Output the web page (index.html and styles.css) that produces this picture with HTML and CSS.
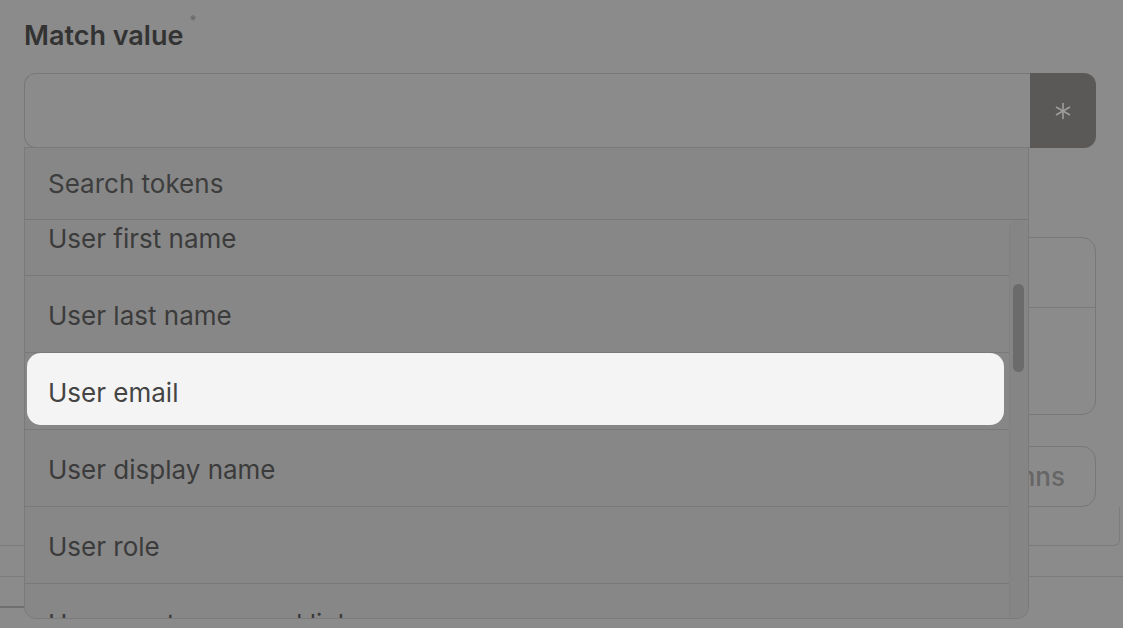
FILE: index.html
```html
<!DOCTYPE html>
<html lang="en">
<head>
    <meta charset="UTF-8">
    <meta name="viewport" content="width=device-width, initial-scale=1.0">
    <title>Match value</title>
    <link rel="stylesheet" href="styles.css">
</head>
<body>
    <div class="page">
        <!-- Campo com menu de tokens aberto -->
        <div class="field">
            <label class="field-label">Match value<span class="required">*</span></label>
            <div class="input-group">
                <div class="input"></div>
                <button class="token-button" aria-label="Insert token">
                    <svg width="18" height="18" viewBox="0 0 18 18">
                        <g stroke="#9d9d9d" stroke-width="1.6" stroke-linecap="round">
                            <line x1="9" y1="1.5" x2="9" y2="16.5"/>
                            <line x1="2.5" y1="5.25" x2="15.5" y2="12.75"/>
                            <line x1="2.5" y1="12.75" x2="15.5" y2="5.25"/>
                        </g>
                    </svg>
                </button>
            </div>

            <div class="token-menu">
                <div class="token-search">Search tokens</div>
                <div class="token-body">
                    <div class="token-list">
                        <div class="token-item"><div class="token-text">User first name</div></div>
                        <div class="token-item"><div class="token-text">User last name</div></div>
                        <div class="token-item is-active"><div class="token-text">User email</div></div>
                        <div class="token-item"><div class="token-text">User display name</div></div>
                        <div class="token-item"><div class="token-text">User role</div></div>
                        <div class="token-item"><div class="token-text">User reset password link</div></div>
                    </div>
                    <div class="scrollbar">
                        <div class="scrollbar-thumb"></div>
                    </div>
                </div>
            </div>
        </div>

        <!-- Conteúdo por trás do menu -->
        <div class="options-box">
            <div class="options-row"></div>
            <div class="options-row"></div>
        </div>

        <div class="actions">
            <button class="ghost-button">Add columns</button>
        </div>

        <div class="footer">
            <div class="sheet-edge"></div>
            <div class="divider"></div>
            <div class="bar"></div>
        </div>
    </div>
</body>
</html>
```

FILE: styles.css
```css
body {
    font-family: Inter, 'Noto Sans', sans-serif;
    margin: 0;
    padding: 0;
    background-color: #8b8b8b;
    height: 100vh;
    overflow: hidden;
    color: #3b3b3b;
}

.page {
    padding: 0 27px 0 24px;
}

/* Campo */
.field {
    position: relative;
    padding-top: 20px;
}

.field-label {
    display: block;
    margin-bottom: 22px;
    font-size: 27px;
    line-height: 31px;
    font-weight: 600;
    color: #333;
}

.required {
    font-size: 14px;
    line-height: 14px;
    font-weight: 400;
    color: #666;
    vertical-align: top;
    margin-left: 6px;
    position: relative;
    top: -6px;
}

.input-group {
    display: flex;
    height: 75px;
}

.input {
    flex: 1;
    border: 1px solid #787878;
    border-right: none;
    border-radius: 12px 0 0 12px;
}

.token-button {
    width: 66px;
    border: none;
    background-color: #5b5958;
    border-radius: 0 12px 12px 0;
    display: flex;
    justify-content: center;
    align-items: center;
    padding: 0;
}

/* Menu de tokens */
.token-menu {
    position: absolute;
    top: 147px;
    left: 0;
    width: 1005px;
    height: 472px;
    box-sizing: border-box;
    background-color: #878787;
    border: 1px solid #7a7a7a;
    border-radius: 0 0 12px 12px;
    display: flex;
    flex-direction: column;
    overflow: hidden;
}

.token-search {
    height: 71px;
    flex-shrink: 0;
    border-bottom: 1px solid #777;
    padding-left: 23px;
    display: flex;
    align-items: center;
    font-size: 26px;
    color: #3d3d3d;
}

.token-body {
    flex: 1;
    display: flex;
    overflow: hidden;
}

.token-list {
    flex: 1;
    margin-top: -21px;
}

.token-item {
    height: 77px;
    box-sizing: border-box;
    border-bottom: 1px solid #797979;
    padding: 0 5px 0 2px;
    display: flex;
}

.token-text {
    flex: 1;
    display: flex;
    align-items: center;
    padding: 2px 0 0 21px;
    font-size: 26px;
    color: #3b3b3b;
    border-radius: 14px;
}

.token-item.is-active .token-text {
    background-color: #f4f4f4;
    margin-bottom: 4px;
    padding-top: 6px;
    color: #444;
}

.scrollbar {
    width: 19px;
    flex-shrink: 0;
    background-color: #858585;
    border-left: 1px solid #818181;
    border-radius: 8px 8px 0 0;
    padding-top: 64px;
    box-sizing: border-box;
}

.scrollbar-thumb {
    width: 11px;
    height: 88px;
    margin-left: 3px;
    border-radius: 6px;
    background-color: #6b6b6b;
}

/* Elementos por trás */
.options-box {
    margin-top: 89px;
    height: 178px;
    box-sizing: border-box;
    border: 1px solid #787878;
    border-radius: 14px;
}

.options-row {
    height: 69px;
    border-bottom: 1px solid #7a7a7a;
}

.options-row + .options-row {
    border-bottom: none;
}

.actions {
    margin-top: 31px;
    display: flex;
    justify-content: flex-end;
}

.ghost-button {
    height: 61px;
    padding: 0 30px;
    border: 1px solid #787878;
    border-radius: 14px;
    background: transparent;
    font-family: Inter, 'Noto Sans', sans-serif;
    font-size: 26px;
    font-weight: 500;
    color: #666;
}

.footer {
    margin: 0 -27px 0 -24px;
}

.sheet-edge {
    height: 39px;
    box-sizing: border-box;
    margin-right: 3px;
    border-bottom: 1px solid #7a7a7a;
    border-right: 1px solid #7d7d7d;
    border-bottom-right-radius: 6px;
}

.divider {
    margin-top: 30px;
    height: 1px;
    background-color: #7c7c7c;
}

.bar {
    margin-top: 29px;
    margin-right: 300px;
    height: 2px;
    background-color: #6f6f6f;
}
```
